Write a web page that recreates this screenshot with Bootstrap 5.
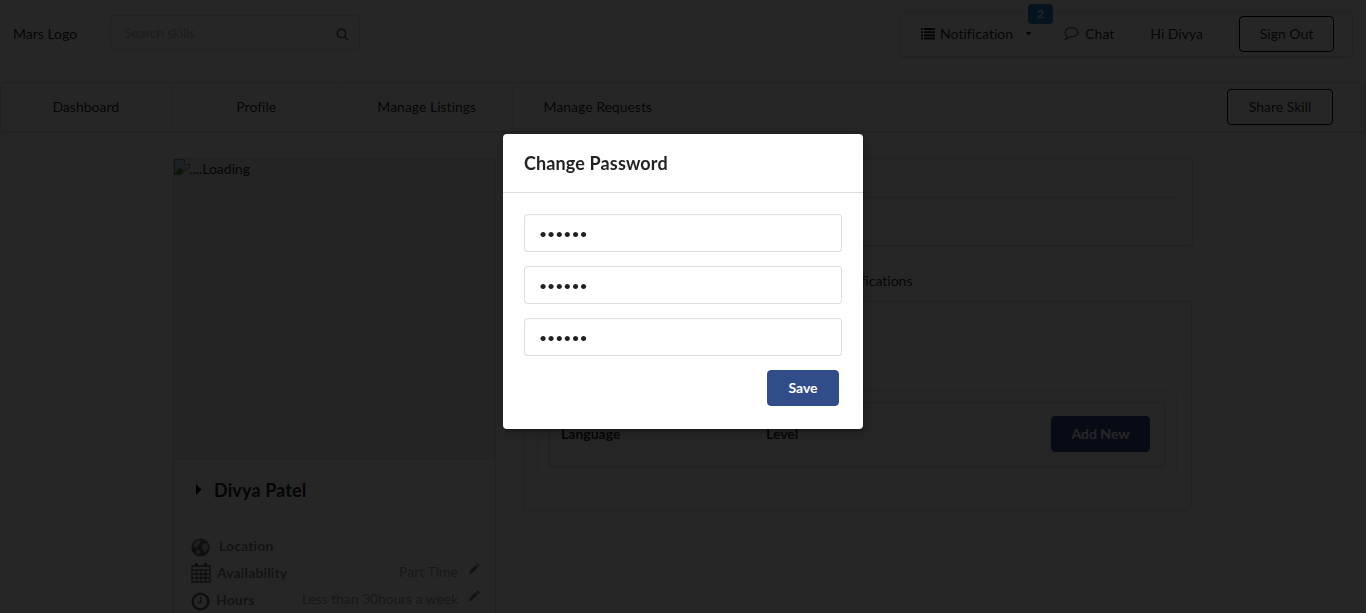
<!DOCTYPE html>
<html lang="en">
<head>
<meta charset="utf-8">
<meta name="viewport" content="width=device-width, initial-scale=1">
<title>Profile</title>
<link href="https://cdn.jsdelivr.net/npm/bootstrap@5.3.0/dist/css/bootstrap.min.css" rel="stylesheet">
<style>
:root{--line:rgba(34,36,38,.15);--ink:rgba(0,0,0,.87)}
body{font-family:Lato,sans-serif;font-size:14px;line-height:20px;font-variant-ligatures:none;color:var(--ink);height:613px;overflow:hidden;background:#fff}
svg{display:block;flex:none}
.line-box{border:1px solid var(--line);border-radius:4px}
.raised{box-shadow:0 1px 2px 0 var(--line)}
.topbar{height:68px;padding:0 13px}
.search-box{width:250px;height:35px;margin-left:33px;padding:0 10px 0 13px;margin-top:-3px}
.search-box span{color:rgba(175,175,175,.87);letter-spacing:-.25px}
.search-box svg{margin-top:4px}
.user-menu{width:453px;height:46px;padding-left:20px;margin-top:-1px}
.menu-label{margin-left:6px}
.menu-label:first-of-type{margin-left:5px;letter-spacing:.05px}
.bubble{margin-left:5px}
.count{left:127px;top:-8px;width:25px;height:20px;border-radius:4px;background:#2185d0;color:#fff;font-size:12px;font-weight:700;line-height:20px}
.btn{--bs-btn-font-size:14px;--bs-btn-line-height:14px;--bs-btn-border-radius:4px;--bs-btn-padding-x:20px;height:36px}
.btn-line{border:1px solid #000;color:var(--ink)}
.btn-navy{--bs-btn-font-weight:700;background:#304d8a;color:#fff;border:1px solid #304d8a}
.sign-out{width:95px;margin-right:18px;padding:0}
.share{width:106px;margin-right:32px;padding:0}
.main-menu{height:50px;margin-top:14px}
.main-menu a{width:12.5%;color:var(--ink);border-right:1px solid rgba(34,36,38,.1)}
.main-menu a:nth-child(4){border-right:0}
.page-body{margin:26px 173px 0;gap:27px}
.profile-card{width:323px;height:480px;border-radius:4px 4px 0 0}
.avatar{height:301px;background:rgba(0,0,0,.05);border-bottom:1px solid rgba(34,36,38,.06)}
.loading{margin-left:-1px}
.person{margin:18px 0 0 22px;gap:12px;font-size:18px;line-height:24px;font-weight:700;letter-spacing:.12px}
.person svg{margin-top:-2px}
.facts{margin:30px 15px 0 17px}
.fact{height:27px;color:rgba(0,0,0,.5)}
.fact span{color:rgba(0,0,0,.4);margin-top:-2px}
.fact b{margin-left:6px;letter-spacing:.13px}
.fact .place{margin-left:9px}
.fact .hours{letter-spacing:-.1px}
.pen{margin:-9px 0 0 11px}
.summary{height:88px;width:670px;padding:38px 16px 0}
.rule{border-color:var(--line)!important}
.tabs{height:55px;padding:25px 0 0 23px;gap:34px}
.tabs span:last-child{margin-left:26px}
.lang{width:669px;height:210px;padding:89px 14px 0 13px}
.lang-outer{height:85px;padding:10px 11px;border-color:rgba(34,36,38,.1)}
.lang-inner{height:65px;padding:0 14px 2px 11px}
.add-new{width:99px;padding:0}
.col-lang{width:205px}
.dimmer{background:rgba(0,0,0,.85)}
.password-dialog{width:360px;height:295px;margin-top:134px;border-radius:4px;background:#fff;box-shadow:1px 3px 3px 0 rgba(0,0,0,.2),1px 3px 15px 2px rgba(0,0,0,.2)}
.dialog-title{height:59px;padding:0 21px;font-size:18px;font-weight:700;letter-spacing:.13px;border-bottom:1px solid var(--line)}
.dialog-form{padding:21px 21px 0;gap:14px}
.dialog-form .form-control{height:38px;padding:9px 14px;font-family:Lato,sans-serif;font-size:14px;color:var(--ink);border:1px solid var(--line);border-radius:4px}
.save{width:72px;margin-right:3px}
</style>
</head>
<body>
<header class="topbar d-flex align-items-center">
  <span>Mars Logo</span>
  <div class="search-box line-box d-flex align-items-center justify-content-between">
    <span>Search skills</span>
    <svg width="13" height="13" viewBox="0 0 13 13" fill="none" stroke="#555" stroke-width="1.5"><circle cx="5.5" cy="5.5" r="4.2"/><path d="M8.7 8.7l3.3 3.3"/></svg>
  </div>
  <div class="user-menu line-box raised ms-auto d-flex align-items-center position-relative">
    <svg width="14" height="12" viewBox="0 0 14 12" fill="#222"><path d="M0 0h2v2H0zm3 0h11v2H3zM0 3.2h2v2H0zm3 0h11v2H3zM0 6.4h2v2H0zm3 0h11v2H3zM0 9.600h2v2H0zm3 0h11v2H3z"/></svg>
    <span class="menu-label">Notification</span>
    <svg class="ms-2 me-4" width="14" height="5" viewBox="0 0 14 5" fill="#222"><path d="M4.500 1h6L7.500 4.500z"/></svg>
    <svg class="bubble" width="15" height="13" viewBox="0 0 15 13" fill="none" stroke="#444" stroke-width="1.100"><path d="M7.500.7c3.700 0 6.500 2 6.500 4.500s-2.800 4.600-6.500 4.600l-1.500-.1C4.900 11 3.500 11.900 1.600 12.200c.8-.9 1.200-1.900 1.300-3.200C1.500 8 1 6.700 1 5.200 1 2.700 3.800.7 7.500.7z"/></svg>
    <span class="menu-label">Chat</span>
    <span class="ms-auto">Hi Divya</span>
    <button class="btn btn-line ms-auto sign-out">Sign Out</button>
    <span class="count position-absolute text-center">2</span>
  </div>
</header>
<nav class="main-menu line-box raised d-flex align-items-stretch">
  <a class="d-flex align-items-center justify-content-center text-decoration-none" href="#">Dashboard</a>
  <a class="d-flex align-items-center justify-content-center text-decoration-none" href="#">Profile</a>
  <a class="d-flex align-items-center justify-content-center text-decoration-none" href="#">Manage Listings</a>
  <a class="d-flex align-items-center justify-content-center text-decoration-none" href="#">Manage Requests</a>
  <button class="btn btn-line ms-auto my-auto share">Share Skill</button>
</nav>
<main class="page-body d-flex align-items-start">
  <aside class="profile-card line-box raised">
    <div class="avatar d-flex align-items-start">
      <svg width="16" height="16" viewBox="0 0 16 16"><path d="M.5.500h10l5 5V9l-4 2-4 4.500h-7z" fill="#c3d9f5" stroke="#888"/><path d="M1 14.500l5-6 4 3-3 3.500H1z" fill="#4f9d3a"/><path d="M10.500.5v5h5" fill="#fff" stroke="#888"/></svg>
      <span class="loading">....Loading</span>
    </div>
    <div class="person d-flex align-items-center">
      <svg width="6" height="11" viewBox="0 0 6 11"><path d="M0 0l5.500 5.500L0 11z"/></svg>
      <span>Divya Patel</span>
    </div>
    <div class="facts">
      <div class="fact d-flex align-items-center">
        <svg class="mt-1" width="19" height="19" viewBox="0 0 20 20"><circle cx="10" cy="10" r="9.500" fill="#666"/><path d="M3 6l3-3 3-1 2 1-2 2 1 1-3 2-1 3-3-2zM12 7l3-2 2 1 1 4-2 4-2 1-1-3-2-2zM6 12l3 1 1 2-2 3-2-2z" fill="#ccc"/></svg>
        <b class="place">Location</b>
      </div>
      <div class="fact d-flex align-items-center">
        <svg width="20" height="21" viewBox="0 0 20 21" fill="none" stroke="#666" stroke-width="1.300"><path d="M1 4h18v16H1zM1 8h18M1 12h18M1 16h18M5.500 8v12M10 8v12M14.500 8v12"/><path d="M5.500 1v4M14.500 1v4" stroke-width="3"/></svg>
        <b>Availability</b><span class="ms-auto">Part Time</span>
        <svg class="pen" width="11" height="11" viewBox="0 0 11 11" fill="#777"><path d="M0 11l.8-3L6.500 2.300l2.200 2.200L3 10.200zM7.200 1.600L8.600.2l2.200 2.200-1.400 1.400z"/></svg>
      </div>
      <div class="fact d-flex align-items-center">
        <svg class="mt-1" width="19" height="19" viewBox="0 0 20 20" fill="none" stroke="#666"><circle cx="10" cy="10" r="8.200" stroke-width="2.600"/><path d="M10.500 5v6H6.500" stroke-width="1.500"/></svg>
        <b>Hours</b><span class="ms-auto hours">Less than 30hours a week</span>
        <svg class="pen" width="11" height="11" viewBox="0 0 11 11" fill="#777"><path d="M0 11l.8-3L6.500 2.300l2.200 2.200L3 10.200zM7.200 1.600L8.600.2l2.200 2.200-1.400 1.400z"/></svg>
      </div>
    </div>
  </aside>
  <section>
    <div class="summary line-box raised"><div class="border-top rule"></div></div>
    <div class="tabs d-flex"><span>Languages</span><span>Skills</span><span>Education</span><span>Certifications</span></div>
    <div class="lang line-box">
      <div class="lang-outer line-box">
        <div class="lang-inner line-box raised d-flex align-items-center">
          <b class="col-lang">Language</b><b>Level</b>
          <button class="btn btn-navy ms-auto add-new">Add New</button>
        </div>
      </div>
    </div>
  </section>
</main>
<div class="dimmer position-fixed top-0 start-0 w-100 h-100 d-flex justify-content-center align-items-start">
  <div class="password-dialog">
    <div class="dialog-title d-flex align-items-center">Change Password</div>
    <form class="dialog-form d-flex flex-column">
      <input class="form-control" type="password" value="abcdef" aria-label="Current password">
      <input class="form-control" type="password" value="abcdef" aria-label="New password">
      <input class="form-control" type="password" value="abcdef" aria-label="Confirm password">
      <button class="btn btn-navy align-self-end save" type="button">Save</button>
    </form>
  </div>
</div>
<script src="https://cdn.jsdelivr.net/npm/bootstrap@5.3.0/dist/js/bootstrap.bundle.min.js"></script>
</body>
</html>
